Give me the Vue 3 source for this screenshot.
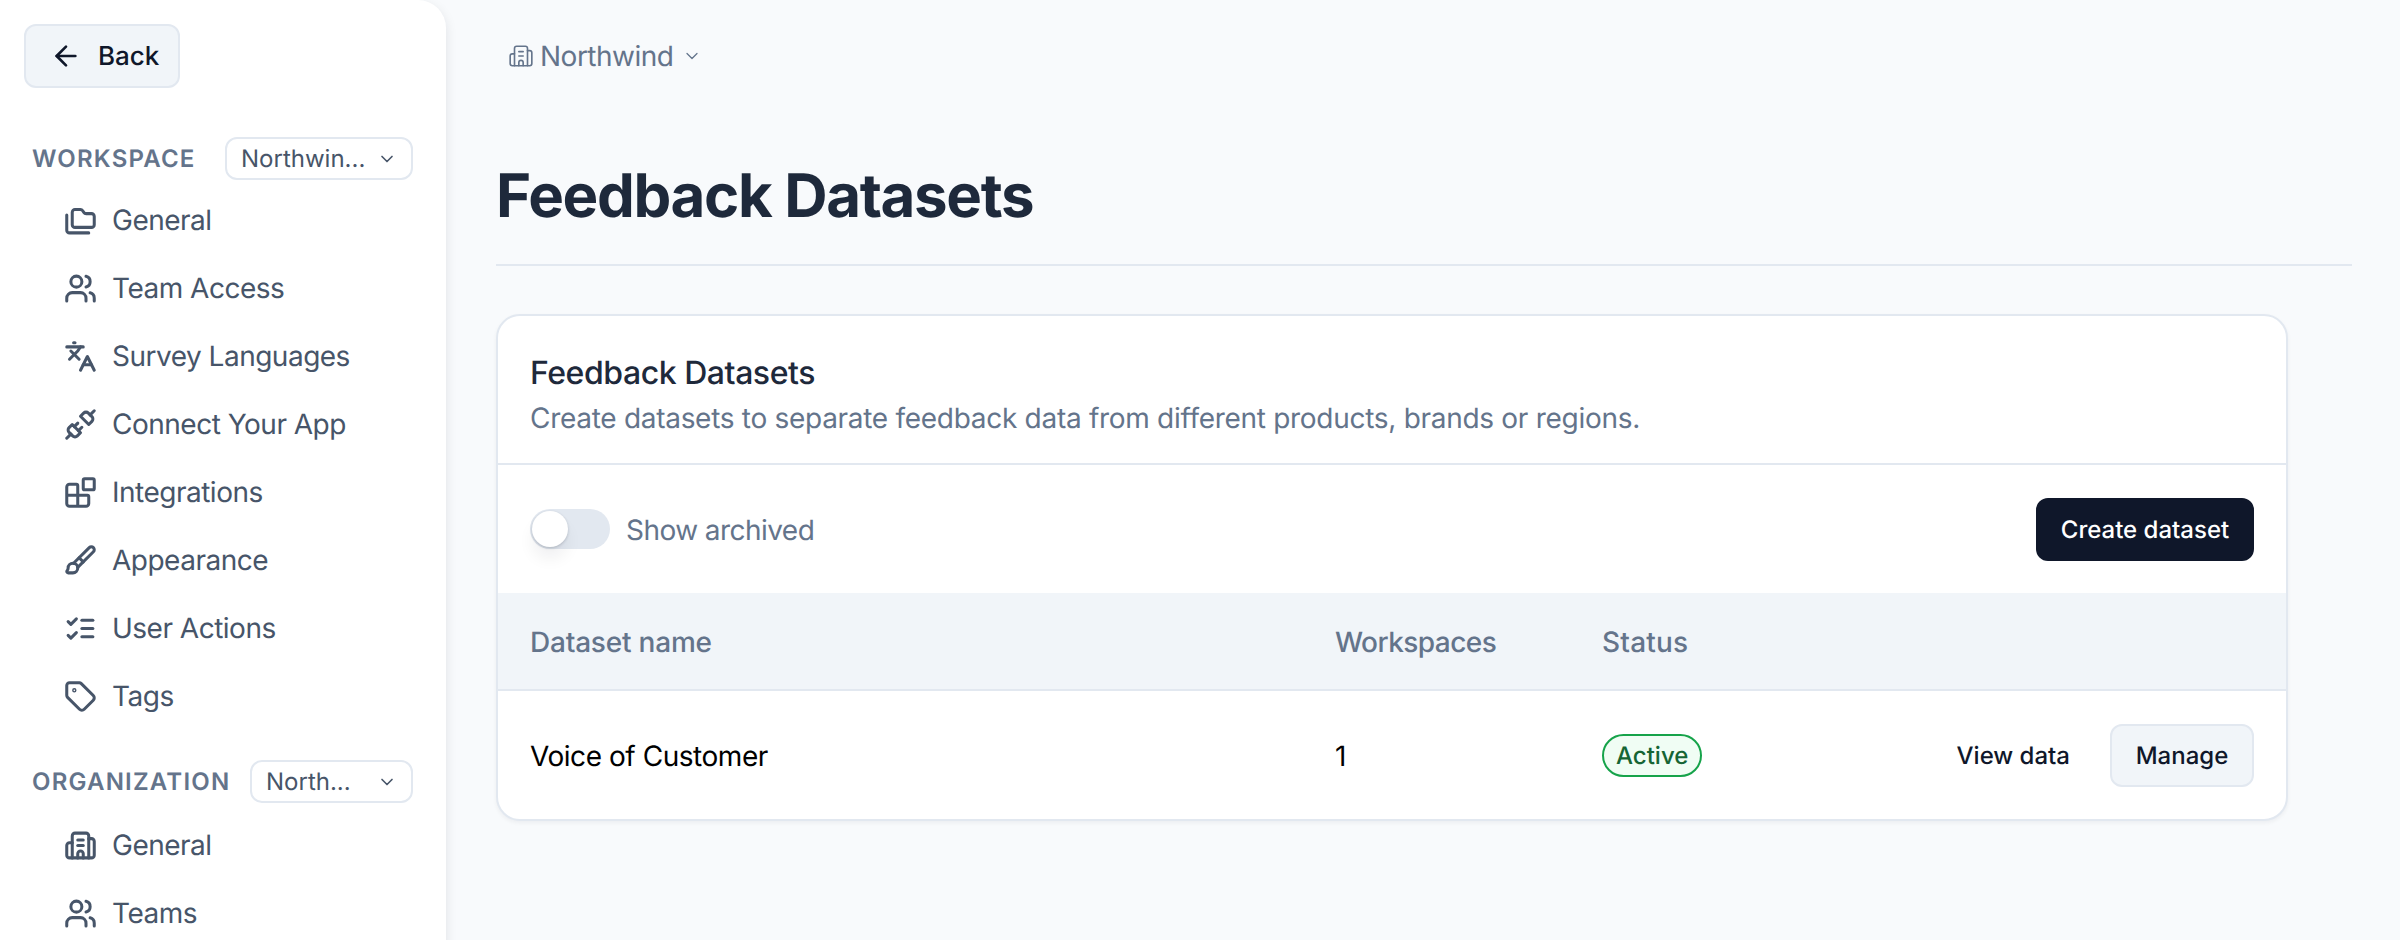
<template>
  <div class="page">
    <aside class="sidebar">
      <button class="back">
        <svg class="back-icon" viewBox="0 0 24 24"><path d="m12 19-7-7 7-7" /><path d="M19 12H5" /></svg>
        <span>Back</span>
      </button>

      <section v-for="group in groups" :key="group.label" class="group">
        <div class="group-head">
          <span class="group-label">{{ group.label }}</span>
          <span class="select" :class="group.selectClass">
            <span>{{ group.select }}</span>
            <svg class="select-chevron" viewBox="0 0 24 24"><path d="m6 9 6 6 6-6" /></svg>
          </span>
        </div>
        <nav class="nav">
          <a v-for="item in group.items" :key="item.label" class="nav-item">
            <svg class="nav-icon" viewBox="0 0 24 24">
              <path v-for="d in icons[item.icon].paths" :key="d" :d="d" />
              <rect v-for="r in icons[item.icon].rects || []" :key="r.x" :x="r.x" :y="r.y" :width="r.w" :height="r.h" :rx="r.rx" />
              <circle v-for="c in icons[item.icon].circles || []" :key="c.cx" :cx="c.cx" :cy="c.cy" :r="c.r" />
            </svg>
            <span>{{ item.label }}</span>
          </a>
        </nav>
      </section>
    </aside>

    <main class="main">
      <div class="crumb">
        <svg class="crumb-icon" viewBox="0 0 24 24">
          <path v-for="d in icons.building.paths" :key="d" :d="d" />
        </svg>
        <span class="crumb-text">Northwind</span>
        <svg class="crumb-chevron" viewBox="0 0 24 24"><path d="m6 9 6 6 6-6" /></svg>
      </div>

      <h1 class="title">Feedback Datasets</h1>

      <div class="card">
        <header class="card-head">
          <h2 class="card-title">Feedback Datasets</h2>
          <p class="card-sub">Create datasets to separate feedback data from different products, brands or regions.</p>
        </header>

        <div class="toolbar">
          <div class="toggle-wrap">
            <span class="toggle"><span class="knob"></span></span>
            <span class="toggle-label">Show archived</span>
          </div>
          <button class="primary">Create dataset</button>
        </div>

        <div class="row head-row">
          <span class="cell">Dataset name</span>
          <span class="cell">Workspaces</span>
          <span class="cell">Status</span>
        </div>

        <div class="row body-row">
          <span class="cell">Voice of Customer</span>
          <span class="cell">1</span>
          <span><span class="badge">Active</span></span>
          <span class="actions">
            <button class="ghost">View data</button>
            <button class="secondary">Manage</button>
          </span>
        </div>
      </div>
    </main>
  </div>
</template>

<script setup>
const icons = {
  folders: { paths: ['M20 17a2 2 0 0 0 2-2V9a2 2 0 0 0-2-2h-3.9a2 2 0 0 1-1.69-.9l-.81-1.2a2 2 0 0 0-1.67-.9H8a2 2 0 0 0-2 2v9a2 2 0 0 0 2 2Z', 'M2 8v11a2 2 0 0 0 2 2h14'] },
  users: {
    paths: ['M16 21v-2a4 4 0 0 0-4-4H6a4 4 0 0 0-4 4v2', 'M22 21v-2a4 4 0 0 0-3-3.87', 'M16 3.13a4 4 0 0 1 0 7.75'],
    circles: [{ cx: 9, cy: 7, r: 4 }]
  },
  languages: { paths: ['m5 8 6 6', 'm4 14 6-6 2-3', 'M2 5h12', 'M7 2h1', 'm22 22-5-10-5 10', 'M14 18h6'] },
  unplug: {
    paths: ['m19 5 3-3', 'm2 22 3-3', 'M6.3 20.3a2.4 2.4 0 0 0 3.4 0L12 18l-6-6-2.3 2.3a2.4 2.4 0 0 0 0 3.4Z', 'M7.5 13.5 10 11', 'M10.5 16.5 13 14', 'm12 6 6 6 2.3-2.3a2.4 2.4 0 0 0 0-3.4l-2.6-2.6a2.4 2.4 0 0 0-3.4 0Z']
  },
  blocks: {
    paths: ['M10 22V7a1 1 0 0 0-1-1H4a2 2 0 0 0-2 2v12a2 2 0 0 0 2 2h12a2 2 0 0 0 2-2v-5a1 1 0 0 0-1-1H2'],
    rects: [{ x: 14, y: 2, w: 8, h: 8, rx: 1 }]
  },
  brush: { paths: ['m11 10 3 3', 'M6.5 21A3.5 3.5 0 1 0 3 17.5a2.62 2.62 0 0 1-.708 1.792A1 1 0 0 0 3 21z', 'M9.969 17.031 21.378 5.624a1 1 0 0 0-3.002-3.002L6.967 14.031'] },
  checks: { paths: ['m3 17 2 2 4-4', 'm3 7 2 2 4-4', 'M13 6h8', 'M13 12h8', 'M13 18h8'] },
  tag: {
    paths: ['M12.586 2.586A2 2 0 0 0 11.172 2H4a2 2 0 0 0-2 2v7.172a2 2 0 0 0 .586 1.414l8.704 8.704a2.426 2.426 0 0 0 3.42 0l6.58-6.58a2.426 2.426 0 0 0 0-3.42z'],
    circles: [{ cx: 7.5, cy: 7.5, r: 0.5 }]
  },
  building: { paths: ['M10 12h4', 'M10 8h4', 'M14 21v-3a2 2 0 0 0-4 0v3', 'M6 10H4a2 2 0 0 0-2 2v7a2 2 0 0 0 2 2h16a2 2 0 0 0 2-2V9a2 2 0 0 0-2-2h-2', 'M6 21V5a2 2 0 0 1 2-2h8a2 2 0 0 1 2 2v16'] }
}

const groups = [
  {
    label: 'WORKSPACE',
    select: 'Northwin...',
    selectClass: 'select-ws',
    items: [
      { label: 'General', icon: 'folders' },
      { label: 'Team Access', icon: 'users' },
      { label: 'Survey Languages', icon: 'languages' },
      { label: 'Connect Your App', icon: 'unplug' },
      { label: 'Integrations', icon: 'blocks' },
      { label: 'Appearance', icon: 'brush' },
      { label: 'User Actions', icon: 'checks' },
      { label: 'Tags', icon: 'tag' }
    ]
  },
  {
    label: 'ORGANIZATION',
    select: 'North...',
    selectClass: 'select-org',
    items: [
      { label: 'General', icon: 'building' },
      { label: 'Teams', icon: 'users' }
    ]
  }
]
</script>

<style>
html, body { margin: 0; background: #f8fafc; }
</style>

<style scoped>
.page {
  display: flex;
  width: 2400px;
  height: 940px;
  overflow: hidden;
  background: #f8fafc;
  font-family: Inter, "Noto Sans", sans-serif;
  font-size: 28px;
  text-rendering: geometricPrecision;
}
svg { fill: none; stroke: currentColor; stroke-linecap: round; stroke-linejoin: round; stroke-width: 2; flex: none; }
button { font-family: inherit; cursor: pointer; text-rendering: geometricPrecision; }

.sidebar {
  width: 446px;
  flex: none;
  box-sizing: border-box;
  height: 1000px;
  padding: 24px 33px 0 24px;
  background: #fff;
  border-radius: 0 28px 28px 0;
  box-shadow: 0 4px 12px rgba(15, 23, 42, .1);
}
.back {
  display: flex;
  align-items: center;
  gap: 16px;
  width: 156px;
  height: 64px;
  box-sizing: border-box;
  padding: 0 0 0 24px;
  background: #f1f5f9;
  border: 2px solid #e2e8f0;
  border-radius: 12px;
  color: #0f172a;
  font-size: 26px;
  font-weight: 500;
}
.back-icon { width: 32px; height: 32px; }

.group { margin-top: 49px; }
.group + .group { margin-top: 30px; }
.group + .group .nav { margin-top: 8px; }
.group-head { display: flex; align-items: center; justify-content: space-between; height: 43px; padding-left: 8px; }
.group-label { color: #64748b; font-size: 24px; font-weight: 600; letter-spacing: 1.2px; }
.select {
  display: flex;
  align-items: center;
  justify-content: space-between;
  box-sizing: border-box;
  height: 43px;
  padding: 0 14px;
  background: #fff;
  border: 2px solid #e2e8f0;
  border-radius: 12px;
  color: #475569;
  font-size: 24px;
}
.select-ws { width: 188px; }
.select-org { width: 163px; }
.select-chevron { width: 20px; height: 20px; }

.nav { display: flex; flex-direction: column; margin-top: 6px; }
.nav-item { display: flex; align-items: center; gap: 15px; height: 68px; padding-left: 40px; color: #475569; letter-spacing: -.5px; }
.nav-icon { width: 33px; height: 33px; stroke-width: 2.2; }

.main { flex: 1; min-width: 0; padding: 0 48px 0 50px; }
.crumb { display: flex; align-items: center; height: 112px; padding-left: 12px; color: #64748b; }
.crumb-icon { width: 26px; height: 26px; stroke-width: 1.5; }
.crumb-text { margin-left: 6px; letter-spacing: -.5px; }
.crumb-chevron { width: 20px; height: 20px; margin-left: 9px; stroke-width: 1.5; }

.title {
  display: flex;
  align-items: center;
  height: 154px;
  margin: 0;
  box-sizing: border-box;
  border-bottom: 2px solid #e2e8f0;
  padding-top: 16px;
  color: #1e293b;
  font-size: 60px;
  font-weight: 700;
  letter-spacing: -1.35px;
}

.card {
  width: 1792px;
  margin-top: 48px;
  box-sizing: border-box;
  background: #fff;
  border: 2px solid #e2e8f0;
  border-radius: 24px;
  box-shadow: 0 2px 4px rgba(15, 23, 42, .05);
  overflow: hidden;
}
.card-head { box-sizing: border-box; height: 149px; padding: 37px 32px 0; border-bottom: 2px solid #e2e8f0; }
.card-title { margin: 0; color: #1e293b; font-size: 32px; font-weight: 500; line-height: 40px; letter-spacing: -.45px; }
.card-sub { margin: 5px 0 0; color: #64748b; line-height: 40px; letter-spacing: -.29px; }

.toolbar { display: flex; align-items: center; justify-content: space-between; height: 128px; padding: 0 32px; }
.toggle-wrap { display: flex; align-items: center; gap: 16px; }
.toggle { display: block; box-sizing: border-box; width: 80px; height: 40px; padding: 2px; background: #e2e8f0; border-radius: 20px; }
.knob { display: block; width: 36px; height: 36px; background: #fff; border-radius: 50%; box-shadow: 0 1px 3px rgba(15, 23, 42, .2), 0 12px 16px rgba(15, 23, 42, .06); }
.toggle-label { padding-top: 2px; color: #64748b; letter-spacing: -.55px; }
.primary {
  width: 218px;
  height: 63px;
  padding: 0;
  background: #0f172a;
  border: 0;
  border-radius: 12px;
  color: #fff;
  font-size: 24px;
  font-weight: 500;
}

.row { display: grid; grid-template-columns: 805px 267px 200px 1fr; align-items: center; padding: 0 32px; }
.cell { padding-top: 2px; letter-spacing: -.45px; }
.head-row { height: 96px; background: #f1f5f9; border-bottom: 2px solid #e2e8f0; color: #64748b; font-weight: 500; }
.head-row .cell { letter-spacing: -.2px; }
.head-row .cell:nth-child(2) { letter-spacing: -.55px; }
.head-row .cell:nth-child(3) { letter-spacing: .2px; }
.body-row { height: 128px; color: #000; }
.badge {
  display: inline-flex;
  align-items: center;
  box-sizing: border-box;
  height: 43px;
  padding: 0 12px;
  background: #f0fdf4;
  border: 2px solid #16a34a;
  border-radius: 22px;
  color: #166534;
  font-size: 24px;
  font-weight: 500;
  vertical-align: middle;
}
.actions { display: flex; align-items: center; justify-content: flex-end; gap: 40px; }
.ghost { padding: 0; background: none; border: 0; color: #0f172a; font-size: 24px; font-weight: 500; }
.secondary {
  width: 144px;
  height: 63px;
  padding: 0;
  background: #f1f5f9;
  border: 2px solid #e2e8f0;
  border-radius: 12px;
  color: #0f172a;
  font-size: 24px;
  font-weight: 500;
}
</style>
